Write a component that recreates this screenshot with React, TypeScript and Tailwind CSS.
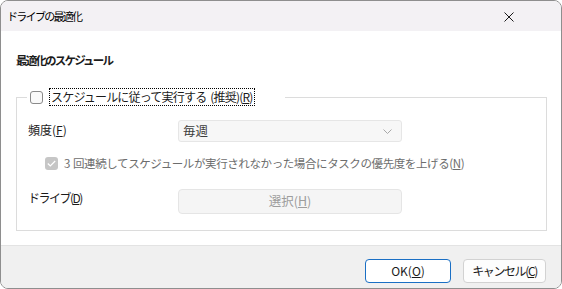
import React from "react";

const U = ({ c }: { c: string }) => <span className="underline">{c}</span>;

export default function App() {
  return (
    <div className="w-[562px] h-[289px] bg-white font-['Noto_Sans_CJK_JP',sans-serif] text-[12px] text-[#1b1b1b]">
      <div className="w-[562px] h-[289px] border border-[#8e8e8e] rounded-[8px] overflow-hidden flex flex-col">
        {/* Title bar */}
        <div className="h-[30px] shrink-0 bg-[#f3f1f4] flex items-center justify-between pl-[6px] pr-[47px]">
          <span className="text-[11px] leading-[16px] tracking-[-1.7px] text-black">ドライブの最適化</span>
          <svg width="10" height="10" viewBox="0 0 10 10" className="mt-[1px]">
            <path d="M0.5 0.5 L9.5 9.5 M9.5 0.5 L0.5 9.5" stroke="#1a1a1a" strokeWidth="1" />
          </svg>
        </div>
        {/* Content */}
        <div className="flex-1 bg-white pl-[15px] pr-[14px] pt-[21px]">
          <div className="font-bold text-[11.5px] leading-[16px] tracking-[-1.8px]">最適化のスケジュール</div>
          <fieldset className="mt-[20px] border border-[#dcdcdc] pl-[11px] pr-[12px] pb-[16px]">
            <legend className="ml-[-1px] w-[258px] h-[18px] flex items-center gap-[6px] pl-[3px]">
              <span className="w-[13px] h-[13px] rounded-[3px] border border-[#8a8a8a] bg-[#f9f9f9] shrink-0" />
              <span className="border border-dotted border-black px-[1px] text-[12px] leading-[16px] tracking-[-0.8px]">
                スケジュールに従って実行する<span className="ml-[2px]"> </span>(推奨)(<U c="R" />)
              </span>
            </legend>
            <div className="mt-[14px] flex items-start">
              <span className="w-[150px] leading-[16px] mt-[2px]">頻度(<U c="F" />)</span>
              <div className="w-[224px] h-[22px] bg-[#f7f7f7] border border-[#e6e6e6] rounded-[3px] flex items-center justify-between pl-[4px] pr-[9px]">
                <span className="text-[12.5px] text-[#3c3c3c]">毎週</span>
                <svg width="9" height="5" viewBox="0 0 9 5">
                  <path d="M0.5 0.5 L4.5 4.5 L8.5 0.5" stroke="#a8a8a8" strokeWidth="1" fill="none" />
                </svg>
              </div>
            </div>
            <div className="mt-[13px] ml-[17px] flex items-center gap-[6px] text-[#6d6d6d]">
              <span className="w-[13px] h-[13px] rounded-[3px] bg-[#c6c6c6] flex items-center justify-center shrink-0">
                <svg width="9" height="7" viewBox="0 0 9 7">
                  <path d="M0.8 3.5 L3.3 6 L8.2 1" stroke="#ffffff" strokeWidth="1.2" fill="none" />
                </svg>
              </span>
              <span className="text-[11.5px] leading-[16px] tracking-[-0.4px]">
                <span className="mr-[3px]">3</span>回連続してスケジュールが実行されなかった場合にタスクの優先度を上げる(<U c="N" />)
              </span>
            </div>
            <div className="mt-[18px] flex items-start">
              <span className="w-[150px] leading-[16px] mt-[1px] tracking-[-1.5px]">ドライブ(<U c="D" />)</span>
              <div className="w-[224px] h-[25px] bg-[#f5f5f5] border border-[#e5e5e5] rounded-[4px] flex items-center justify-center text-[12.5px] text-[#9d9d9d]">
                選択(<U c="H" />)
              </div>
            </div>
          </fieldset>
        </div>
        {/* Footer */}
        <div className="h-[43px] shrink-0 bg-[#f0f0f0] border-t border-[#e3e3e3] flex items-start justify-end gap-[12px] pr-[15px] pt-[13px]">
          <div className="w-[86px] h-[24px] rounded-[4px] border border-[#1a6fc4] bg-white flex items-center justify-center">
            OK(<U c="O" />)
          </div>
          <div className="w-[83px] h-[24px] rounded-[4px] border border-[#d2d2d2] bg-[#fdfdfd] flex items-center justify-center tracking-[-1.4px]">
            キャンセル(<U c="C" />)
          </div>
        </div>
      </div>
    </div>
  );
}
